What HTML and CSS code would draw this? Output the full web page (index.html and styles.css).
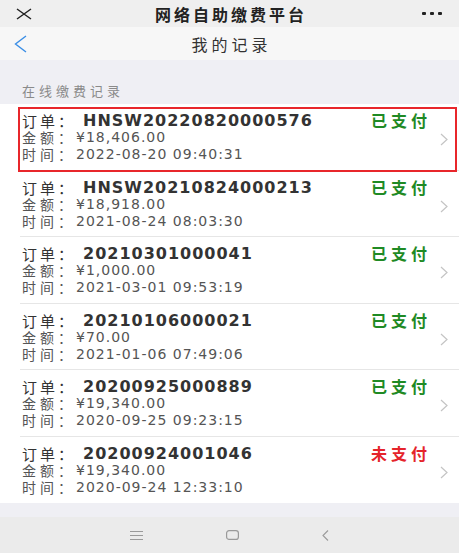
FILE: index.html
```html
<!DOCTYPE html>
<html lang="zh-CN">
<head>
    <meta charset="UTF-8">
    <meta name="viewport" content="width=device-width, initial-scale=1.0">
    <title>我的记录</title>
    <link rel="stylesheet" href="styles.css">
</head>
<body>
    <div class="topbar">
        <div class="topbar-side">
            <svg class="close-icon" width="16" height="12" viewBox="0 0 16 12">
                <path d="M1 1 L15 11 M15 1 L1 11" stroke="#222" stroke-width="1.5" fill="none"/>
            </svg>
        </div>
        <div class="topbar-title">网络自助缴费平台</div>
        <div class="topbar-side topbar-right">
            <span class="dot"></span><span class="dot"></span><span class="dot"></span>
        </div>
    </div>

    <div class="navbar">
        <svg class="back-icon" width="13" height="18" viewBox="0 0 13 18">
            <polyline points="12,1 1.5,9 12,17" stroke="#3a8ee6" stroke-width="1.4" fill="none"/>
        </svg>
        <div class="navbar-title">我的记录</div>
    </div>

    <div class="section-title">在线缴费记录</div>

    <div class="records">
        <div class="record highlight">
            <div class="info">
                <div class="line order"><span class="label">订单：</span><b class="num">HNSW20220820000576</b></div>
                <div class="line"><span class="label">金额：</span><span class="val">¥18,406.00</span></div>
                <div class="line"><span class="label">时间：</span><span class="val">2022-08-20 09:40:31</span></div>
            </div>
            <div class="status paid">已支付</div>
            <svg class="arrow" width="8" height="13" viewBox="0 0 8 13"><polyline points="1,1 7,6.5 1,12" stroke="#c4c4c4" stroke-width="1.2" fill="none"/></svg>
        </div>
        <div class="record">
            <div class="info">
                <div class="line order"><span class="label">订单：</span><b class="num">HNSW20210824000213</b></div>
                <div class="line"><span class="label">金额：</span><span class="val">¥18,918.00</span></div>
                <div class="line"><span class="label">时间：</span><span class="val">2021-08-24 08:03:30</span></div>
            </div>
            <div class="status paid">已支付</div>
            <svg class="arrow" width="8" height="13" viewBox="0 0 8 13"><polyline points="1,1 7,6.5 1,12" stroke="#c4c4c4" stroke-width="1.2" fill="none"/></svg>
        </div>
        <div class="record">
            <div class="info">
                <div class="line order"><span class="label">订单：</span><b class="num">20210301000041</b></div>
                <div class="line"><span class="label">金额：</span><span class="val">¥1,000.00</span></div>
                <div class="line"><span class="label">时间：</span><span class="val">2021-03-01 09:53:19</span></div>
            </div>
            <div class="status paid">已支付</div>
            <svg class="arrow" width="8" height="13" viewBox="0 0 8 13"><polyline points="1,1 7,6.5 1,12" stroke="#c4c4c4" stroke-width="1.2" fill="none"/></svg>
        </div>
        <div class="record">
            <div class="info">
                <div class="line order"><span class="label">订单：</span><b class="num">20210106000021</b></div>
                <div class="line"><span class="label">金额：</span><span class="val">¥70.00</span></div>
                <div class="line"><span class="label">时间：</span><span class="val">2021-01-06 07:49:06</span></div>
            </div>
            <div class="status paid">已支付</div>
            <svg class="arrow" width="8" height="13" viewBox="0 0 8 13"><polyline points="1,1 7,6.5 1,12" stroke="#c4c4c4" stroke-width="1.2" fill="none"/></svg>
        </div>
        <div class="record">
            <div class="info">
                <div class="line order"><span class="label">订单：</span><b class="num">20200925000889</b></div>
                <div class="line"><span class="label">金额：</span><span class="val">¥19,340.00</span></div>
                <div class="line"><span class="label">时间：</span><span class="val">2020-09-25 09:23:15</span></div>
            </div>
            <div class="status paid">已支付</div>
            <svg class="arrow" width="8" height="13" viewBox="0 0 8 13"><polyline points="1,1 7,6.5 1,12" stroke="#c4c4c4" stroke-width="1.2" fill="none"/></svg>
        </div>
        <div class="record">
            <div class="info">
                <div class="line order"><span class="label">订单：</span><b class="num">20200924001046</b></div>
                <div class="line"><span class="label">金额：</span><span class="val">¥19,340.00</span></div>
                <div class="line"><span class="label">时间：</span><span class="val">2020-09-24 12:33:10</span></div>
            </div>
            <div class="status unpaid">未支付</div>
            <svg class="arrow" width="8" height="13" viewBox="0 0 8 13"><polyline points="1,1 7,6.5 1,12" stroke="#c4c4c4" stroke-width="1.2" fill="none"/></svg>
        </div>
    </div>

    <div class="bottom-gap"></div>

    <div class="sysbar">
        <svg width="13" height="9" viewBox="0 0 13 9">
            <path d="M0 0.5 H13 M0 4.5 H13 M0 8.5 H13" stroke="#9a9a9a" stroke-width="1" fill="none"/>
        </svg>
        <svg width="13" height="10" viewBox="0 0 13 10">
            <rect x="0.6" y="0.6" width="11.8" height="8.8" rx="2.5" stroke="#9a9a9a" stroke-width="1.2" fill="none"/>
        </svg>
        <svg width="7" height="11" viewBox="0 0 7 11">
            <polyline points="6,0.5 1,5.5 6,10.5" stroke="#9a9a9a" stroke-width="1.1" fill="none"/>
        </svg>
    </div>
</body>
</html>
```

FILE: styles.css
```css
body {
    margin: 0;
    font-family: "DejaVu Sans", "Noto Sans CJK SC", sans-serif;
    background: #efeff4;
    color: #333;
}
.topbar {
    height: 27px;
    background: #efefef;
    display: flex;
    align-items: center;
    justify-content: space-between;
}
.topbar-side {
    width: 60px;
    display: flex;
    align-items: center;
}
.close-icon {
    margin-left: 16px;
}
.topbar-right {
    justify-content: flex-end;
    gap: 4px;
    padding-right: 17px;
    box-sizing: border-box;
}
.dot {
    width: 4px;
    height: 3px;
    background: #222;
    border-radius: 1px;
}
.topbar-title {
    font-family: "Noto Sans CJK SC", sans-serif;
    font-size: 16px;
    line-height: 20px;
    font-weight: bold;
    letter-spacing: 3px;
    padding-left: 3px;
    color: #222;
}
.navbar {
    height: 33px;
    background: #f7f7f7;
    display: flex;
    align-items: center;
}
.back-icon {
    margin-left: 14px;
}
.navbar-title {
    flex: 1;
    text-align: center;
    margin-left: -27px;
    padding-left: 4px;
    font-family: "Noto Sans CJK SC", sans-serif;
    font-size: 16px;
    line-height: 20px;
    letter-spacing: 4px;
    color: #333;
}
.section-title {
    height: 44px;
    box-sizing: border-box;
    padding: 22px 0 0 22px;
    line-height: 17px;
    font-family: "Noto Sans CJK SC", sans-serif;
    font-size: 13px;
    letter-spacing: 4px;
    color: #8a8a8a;
}
.records {
    background: #fff;
}
.record {
    margin-left: 20px;
    padding: 8px 0 6.5px 2px;
    border-bottom: 1px solid #e6e6e6;
    display: flex;
    position: relative;
}
.record:last-child {
    border-bottom: none;
    padding-bottom: 7.5px;
}
.record.highlight::before {
    content: "";
    position: absolute;
    left: -2px;
    top: 3px;
    right: 2px;
    bottom: -2px;
    border: 2px solid #e8262b;
}
.info {
    flex: 1;
}
.line {
    height: 17px;
    line-height: 17px;
    font-size: 14px;
    color: #555;
    white-space: nowrap;
}
.label, .val, .num {
    display: inline-block;
    height: 17px;
    line-height: 17px;
    vertical-align: top;
}
.label {
    font-family: "Noto Sans CJK SC", sans-serif;
    letter-spacing: 4px;
}
.val {
    letter-spacing: 1px;
}
.order {
    color: #333;
}
.order .label {
    font-size: 15px;
    letter-spacing: 3px;
}
.num {
    font-size: 16px;
    letter-spacing: 1px;
    margin-left: 7px;
    color: #333;
}
.status {
    align-self: flex-start;
    height: 17px;
    line-height: 17px;
    font-family: "Noto Sans CJK SC", sans-serif;
    font-size: 16px;
    font-weight: bold;
    letter-spacing: 4px;
    margin-right: 9px;
}
.paid {
    color: #1f8a24;
}
.unpaid {
    color: #e5242b;
}
.arrow {
    align-self: center;
    margin: 4px 11px 0 0;
}
.bottom-gap {
    height: 14px;
    background: #efeff4;
}
.sysbar {
    height: 36px;
    background: #ebebeb;
    display: flex;
    align-items: center;
    justify-content: center;
    gap: 83px;
}
```
